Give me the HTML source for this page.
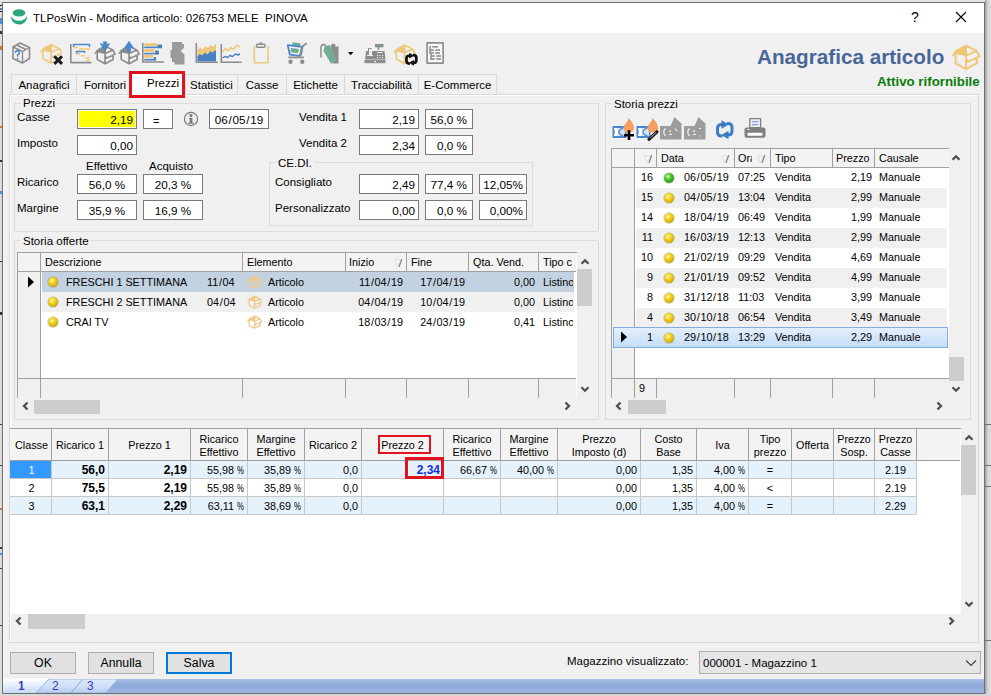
<!DOCTYPE html>
<html><head><meta charset="utf-8">
<style>
*{box-sizing:border-box}
html,body{margin:0;padding:0}
body{width:991px;height:696px;overflow:hidden;position:relative;background:#e6e6e6;font-family:"Liberation Sans",sans-serif;font-size:11.5px;color:#000}
.a{position:absolute}
.win{left:2px;top:2px;width:983px;height:692px;border:1px solid #6f6f6f;background:#f0f0f0}
.tb{position:absolute;background:#fff;border:1px solid #7a7a7a;text-align:right;padding-right:3px;padding-top:1px;line-height:18px;font-size:11.7px;white-space:nowrap;height:20px!important}
.lbl{position:absolute;white-space:nowrap;line-height:14px}
.grp{position:absolute;border:1px solid #dcdcdc}
.glbl{position:absolute;background:#f0f0f0;padding:0 2px;line-height:14px;white-space:nowrap}
.tab{position:absolute;top:74px;height:21px;border:1px solid #d9d9d9;border-right:none;background:#f0f0f0;text-align:center;line-height:20px;white-space:nowrap}
.g{font-size:10.8px;white-space:nowrap}
.gh{position:absolute;line-height:18px;white-space:nowrap}
.vl{position:absolute;width:1px;background:#a0a0a0}
.hl{position:absolute;height:1px;background:#a0a0a0}
.dot{position:absolute;width:10px;height:10px;border-radius:50%;box-shadow:0 0 0 0.5px rgba(90,80,20,.45);background:radial-gradient(circle at 40% 35%,#fff6a0 0,#f0d020 35%,#c8a000 80%,#8a6d00 100%)}
.gdot{background:radial-gradient(circle at 40% 35%,#c8ffb0 0,#40c020 40%,#1a8a10 85%,#0d5a08 100%)}
.btn{position:absolute;border:1px solid #adadad;background:#e1e1e1;text-align:center;line-height:20px;font-size:12.3px}
</style></head><body>
<!-- background left strip -->
<div class="a" style="left:0;top:0;width:2px;height:696px;background:#dcdcdc"></div><div class="a" style="left:0;top:0;width:991px;height:2px;background:#e4e4e4"></div>
<div class="a" style="left:985px;top:0;width:6px;height:696px;background:linear-gradient(90deg,#9a9a9a,#cfcfcf 40%,#e4e4e4)"></div><div class="a" style="left:0;top:694px;width:991px;height:2px;background:#d8d8d8"></div><div class="a" style="left:0;top:5px;width:2px;height:1px;background:#202020"></div><div class="a" style="left:0;top:8px;width:2px;height:2px;background:#5080c0"></div><div class="a" style="left:0;top:11px;width:2px;height:1px;background:#202020"></div><div class="a" style="left:0;top:18px;width:2px;height:6px;background:#4a90e0"></div><div class="a" style="left:0;top:31px;width:2px;height:3px;background:#403020"></div><div class="a" style="left:0;top:46px;width:2px;height:4px;background:#c08030"></div><div class="a" style="left:0;top:126px;width:2px;height:2px;background:#c08030"></div><div class="a" style="left:0;top:160px;width:2px;height:2px;background:#303030"></div><div class="a" style="left:0;top:191px;width:2px;height:3px;background:#4a90e0"></div><div class="a" style="left:0;top:261px;width:2px;height:1px;background:#303030"></div><div class="a" style="left:0;top:312px;width:2px;height:3px;background:#403020"></div><div class="a" style="left:0;top:424px;width:2px;height:1px;background:#404040"></div><div class="a" style="left:0;top:465px;width:2px;height:1px;background:#404040"></div><div class="a" style="left:0;top:508px;width:2px;height:2px;background:#c08030"></div><div class="a" style="left:0;top:547px;width:2px;height:2px;background:#404040"></div><div class="a" style="left:0;top:553px;width:2px;height:2px;background:#4a90e0"></div><div class="a" style="left:0;top:568px;width:2px;height:1px;background:#404040"></div><div class="a" style="left:0;top:625px;width:2px;height:1px;background:#404040"></div><div class="a" style="left:985px;top:424px;width:6px;height:1px;background:#707070"></div><div class="a" style="left:985px;top:465px;width:6px;height:1px;background:#707070"></div><div class="a" style="left:985px;top:486px;width:6px;height:1px;background:#707070"></div><div class="a" style="left:985px;top:640px;width:6px;height:1px;background:#707070"></div><div class="a win"></div>
<!-- title bar -->
<div class="a" style="left:3px;top:3px;width:981px;height:30px;background:#fff"></div>
<svg class="a" style="left:11px;top:8px" width="18" height="18" viewBox="0 0 18 18"><ellipse cx="8" cy="4.9" rx="6.3" ry="3.7" fill="#2aa879"/><path d="M0 7.5 C2 14.5 14 14.5 16 7.5 C16.5 13 12.5 16.5 8 16.5 C3.5 16.5 -0.5 13 0 7.5Z" fill="#2aa879"/></svg>
<div class="lbl" style="left:33px;top:11px;font-size:11.5px;color:#000">TLPosWin - Modifica articolo: 026753 MELE&nbsp; PINOVA</div>
<div class="lbl" style="left:911px;top:10px;font-size:14px">?</div>
<svg class="a" style="left:955px;top:11px" width="12" height="12" viewBox="0 0 12 12"><path d="M1 1L11 11M11 1L1 11" stroke="#000" stroke-width="1.1"/></svg>

<svg class="a" style="left:0;top:0" width="460" height="70" viewBox="0 0 460 70">
<g fill="none" stroke-linejoin="round">
<!-- 1 box ? -->
<path d="M13 47 L20 43 L29.5 47.5 V58.5 L22.5 63 L13 58.5 Z" stroke="#8c8c8c" stroke-width="1.6"/>
<path d="M13 47 L22.5 51.5 L29.5 47.5 M22.5 51.5 V63 M16.5 45 L26 49.5" stroke="#8c8c8c" stroke-width="1.4"/>
<path d="M15.3 52.8 Q15.6 50.6 17.6 50.7 Q19.6 50.9 19.3 52.9 Q19 54.4 17.6 55 V56.6" stroke="#3f80cc" stroke-width="1.5"/>
<circle cx="17.6" cy="58.6" r="0.9" fill="#3f80cc"/>
<!-- 2 open box x --><path d="M51.00 44.20 L42.80 48.50 L40.20 52.50 L42.80 50.50 L51.00 52.30 Z" fill="#eec77a" stroke="#eec77a" stroke-width="0.90" stroke-linejoin="round"/><path d="M42.80 50.00 V58.50 L51.00 63.00 L59.50 58.50 V54.00 M51.00 44.20 V63.00 M51.00 44.50 L59.30 48.60 L51.00 52.30 M59.30 48.60 L61.70 52.90 L52.50 57.30 L51.00 54.50" fill="none" stroke="#eec77a" stroke-width="1.5" stroke-linejoin="round"/><path d="M54.3 56.2 L62 63.9 M62 56.2 L54.3 63.9" stroke="#f0f0f0" stroke-width="5"/><path d="M54.3 56.2 L62 63.9 M62 56.2 L54.3 63.9" stroke="#1a1a1a" stroke-width="3"/>
<!-- 3 gantt -->
<path d="M70.8 44 V62.6 H91.5" stroke="#8c8c8c" stroke-width="1.6"/>
<path d="M73.5 47 V44.5 H89.5 V47" stroke="#4a86cc" stroke-width="1.5"/>
<path d="M73.5 47.5 H78 M79 49 H90 M76.5 54 H80 M81 55.8 H85 M85.5 58 H90 M86 60.5 H90" stroke="#eec77a" stroke-width="1.5"/>
<path d="M76.5 53.5 V51.5 H84.5 V53" stroke="#4a86cc" stroke-width="1.5"/>
<!-- 4 box down arrow --><path d="M105.00 45.84 L97.21 49.92 L94.74 53.72 L97.21 51.82 L105.00 53.53 Z" fill="#8a8a8a" stroke="#8a8a8a" stroke-width="0.96" stroke-linejoin="round"/><path d="M97.21 51.35 V59.42 L105.00 63.70 L113.07 59.42 V55.15 M105.00 45.84 V63.70 M105.00 46.12 L112.88 50.02 L105.00 53.53 M112.88 50.02 L115.16 54.10 L106.42 58.28 L105.00 55.62" fill="none" stroke="#8a8a8a" stroke-width="1.6" stroke-linejoin="round"/><path d="M103.3 41.8 H106.7 V44.5 L109.8 43.6 L105 51.2 L100.2 43.6 L103.3 44.5 Z" fill="#4a86cc" stroke="#4a86cc" stroke-width="0.6" stroke-linejoin="round"/>
<!-- 5 box up arrow --><path d="M129.00 45.84 L121.21 49.92 L118.74 53.72 L121.21 51.82 L129.00 53.53 Z" fill="#8a8a8a" stroke="#8a8a8a" stroke-width="0.96" stroke-linejoin="round"/><path d="M121.21 51.35 V59.42 L129.00 63.70 L137.07 59.42 V55.15 M129.00 45.84 V63.70 M129.00 46.12 L136.88 50.02 L129.00 53.53 M136.88 50.02 L139.16 54.10 L130.43 58.28 L129.00 55.62" fill="none" stroke="#8a8a8a" stroke-width="1.6" stroke-linejoin="round"/><path d="M127.3 51.5 H130.7 V47.5 L133.8 48.3 L129 41.2 L124.2 48.3 L127.3 47.5 Z" fill="#4a86cc" stroke="#4a86cc" stroke-width="0.6" stroke-linejoin="round"/>
<!-- 6 bar chart -->
<path d="M142.8 43 V62 H164" stroke="#8c8c8c" stroke-width="1.6"/>
<g stroke="none"><rect x="144.2" y="43.2" width="12.8" height="2.8" fill="#eec77a"/><rect x="157.5" y="44.5" width="4.5" height="3.6" fill="#4a80c4"/><rect x="144.2" y="46.6" width="17.8" height="1.6" fill="#4a80c4"/>
<rect x="144.2" y="49.1" width="10.3" height="2.9" fill="#eec77a"/><rect x="155.2" y="50.5" width="3.6" height="3.9" fill="#4a80c4"/><rect x="144.2" y="52.8" width="14.6" height="1.6" fill="#4a80c4"/>
<rect x="144.2" y="55" width="8.8" height="3" fill="#eec77a"/><rect x="153.8" y="57" width="2.2" height="3.5" fill="#4a80c4"/><rect x="144.2" y="58.9" width="11.8" height="1.6" fill="#4a80c4"/></g>
<!-- 7 gray blob -->
<path d="M172 42 H182 V44 H184 V48 L180.5 51 L184.5 54.5 V64.5 H174.5 V62 H172 V58 H170.5 V50 H172 Z" fill="#9a9a9a"/>
<!-- 8 area chart -->
<path d="M196.3 43 V62.3 H217.8" stroke="#8c8c8c" stroke-width="1.6"/>
<path d="M197.5 50 L200 47.5 L202.5 49.5 L205.5 46 L208 48 L211 45 L213 47 L216 43.5 V61.5 H197.5 Z" fill="#eec77a"/>
<path d="M197.5 56 L200 54 L202 55.5 L205 52.5 L207.5 54.5 L210.5 51 L212.5 52.5 L216 50 V61.5 H197.5 Z" fill="#4a80c4"/>
<!-- 9 line chart -->
<path d="M221.3 44 V62.3 H241.7" stroke="#8c8c8c" stroke-width="1.6"/>
<path d="M222.5 52 L225.5 48.5 L228 51 L231 47.5 L233.5 49.5 L237 45 L240 47" stroke="#eec77a" stroke-width="1.5"/>
<path d="M222.5 58 L225 56.5 L227.5 57.5 L230 55.5 L232.5 56.5 L235.5 54 L238 55 L240 54" stroke="#4a80c4" stroke-width="1.4"/>
<!-- 10 clipboard -->
<path d="M254.3 46 V62.8 H268 V46" stroke="#eec77a" stroke-width="1.6"/>
<rect x="256.5" y="44.3" width="8.5" height="3" rx="1" stroke="#8c8c8c" stroke-width="1.5"/>
<path d="M259.5 43.5 Q260.8 41.5 262 43.5" stroke="#8c8c8c" stroke-width="1.2"/>
<!-- 11 cart -->
<path d="M292.5 42.3 L300.5 43.3 L300 46.8 L292 45.8 Z" fill="#6fae92"/>
<path d="M287.8 45.2 L302 46.8 L300 55.8 L289.8 54.6 Z" stroke="#4a86cc" stroke-width="1.8"/>
<path d="M291 48 L298.8 49 L298 53.3 L290.5 52.3 Z" fill="#6fae92"/>
<path d="M300.8 55.5 L302.8 46 L306.8 43.3" stroke="#8c8c8c" stroke-width="1.8"/>
<path d="M288.3 57.4 H303.8" stroke="#8c8c8c" stroke-width="1.8"/>
<circle cx="290.5" cy="61.7" r="2.2" fill="#8c8c8c"/><circle cx="302.2" cy="61.7" r="2.2" fill="#8c8c8c"/>
<!-- 12 bag -->
<path d="M321 57.5 V48 Q321 44.5 323.5 44.5 Q326 44.5 326 47.5 V50" stroke="#8c8c8c" stroke-width="1.5"/>
<path d="M331 46 Q331 43 333.5 43.5 Q336 44 335.5 47 L338.5 46 V63.5 H333 Z" fill="#8c8c8c"/>
<path d="M324.5 46.5 L330 45 L336.5 61 L331 63.8 L323.5 51 Z" fill="#6fae92"/>
<path d="M348 52 H353.5 L350.7 55.2 Z" fill="#000"/>
<!-- 13 cash register -->
<rect x="375" y="44" width="8.5" height="3.3" fill="#8c8c8c"/><path d="M376.5 45.6 H382" stroke="#6fae92" stroke-width="1.2"/>
<path d="M378.5 47 V50" stroke="#8c8c8c" stroke-width="1.5"/>
<path d="M366 51 H368 V48 H372 V51 H384.5 L385.5 59.5 H365 Z" fill="#8c8c8c"/>
<rect x="369" y="48.8" width="3" height="7" fill="#f0f0f0"/>
<path d="M367 55.5 H373 M377 52.5 H382.5" stroke="#f0f0f0" stroke-width="1"/>
<path d="M377 55.5 H378 M379.5 55.5 H380.5 M382 55.5 H383 M377 57.5 H378 M379.5 57.5 H380.5 M382 57.5 H383" stroke="#f0f0f0" stroke-width="1"/>
<rect x="364.5" y="60" width="21" height="3.2" fill="#8c8c8c"/><rect x="374" y="61" width="2" height="1.2" fill="#f0f0f0"/>
<!-- 14 box refresh --><path d="M404.50 44.70 L396.30 49.00 L393.70 53.00 L396.30 51.00 L404.50 52.80 Z" fill="#eec77a" stroke="#eec77a" stroke-width="0.90" stroke-linejoin="round"/><path d="M396.30 50.50 V59.00 L404.50 63.50 L413.00 59.00 V54.50 M404.50 44.70 V63.50 M404.50 45.00 L412.80 49.10 L404.50 52.80 M412.80 49.10 L415.20 53.40 L406.00 57.80 L404.50 55.00" fill="none" stroke="#eec77a" stroke-width="1.5" stroke-linejoin="round"/><circle cx="411.3" cy="59.3" r="6.6" fill="#f0f0f0"/><path d="M411.22 55.73 L409.18 55.73 Q406.46 55.73 406.46 58.45 L406.46 60.83 Q406.46 63.55 409.18 63.55 L409.86 63.55" fill="none" stroke="#101010" stroke-width="2.7"/><path d="M409.18 52.87 L414.14 55.73 L409.18 58.58 Z" fill="#101010"/><path d="M411.56 62.87 L413.60 62.87 Q416.32 62.87 416.32 60.15 L416.32 57.77 Q416.32 55.05 413.60 55.05 L412.92 55.05" fill="none" stroke="#101010" stroke-width="2.7"/><path d="M413.94 60.01 L408.97 62.87 L413.94 65.72 Z" fill="#101010"/>
<!-- 15 document -->
<rect x="427.1" y="42.9" width="16" height="20.2" fill="#fafafa" stroke="#8c8c8c" stroke-width="1.7"/>
<g fill="#8c8c8c" stroke="none">
<rect x="429.3" y="46" width="1.6" height="8"/><rect x="430.3" y="53.5" width="1.6" height="6.3"/>
<rect x="432.3" y="46" width="5.6" height="1.6"/>
<rect x="430.8" y="49.3" width="3" height="1.6"/><rect x="435.2" y="49.3" width="4.8" height="1.6"/>
<rect x="430.8" y="52.2" width="3" height="1.6"/><rect x="435.2" y="52.2" width="4.8" height="1.6"/>
<rect x="431.8" y="55.2" width="3" height="1.6"/><rect x="436.2" y="55.2" width="4.8" height="1.6"/>
<rect x="430.3" y="58.2" width="4.5" height="1.6"/><rect x="436.2" y="58.2" width="4.8" height="1.6"/>
</g>
</g>
</svg>
<svg class="a" style="left:940px;top:36px" width="44" height="36" viewBox="940 36 44 36"><path d="M965.97 45.25 L955.56 50.72 L952.25 55.80 L955.56 53.26 L965.97 55.54 Z" fill="#eec877" stroke="#eec877" stroke-width="1.20" stroke-linejoin="round"/><path d="M955.56 52.62 V63.41 L965.97 69.13 L976.76 63.41 V57.70 M965.97 45.25 V69.13 M965.97 45.63 L976.51 50.84 L965.97 55.54 M976.51 50.84 L979.56 56.30 L967.88 61.89 L965.97 58.34" fill="none" stroke="#eec877" stroke-width="2.0" stroke-linejoin="round"/></svg>

<!-- header -->
<div class="lbl" style="left:757px;top:44px;font-size:20.7px;font-weight:bold;color:#4a6699;line-height:26px">Anagrafica articolo</div>
<div class="lbl" style="left:877px;top:74px;font-size:13.3px;font-weight:bold;color:#0c7c0c;line-height:16px">Attivo rifornibile</div>

<!-- tabs -->
<div class="a" style="left:9px;top:94px;width:970px;height:1px;background:#d9d9d9"></div>
<div class="tab" style="left:11px;width:65px">Anagrafici</div>
<div class="tab" style="left:76px;width:57px">Fornitori</div>
<div class="tab" style="left:185px;width:52px">Statistici</div>
<div class="tab" style="left:237px;width:49px">Casse</div>
<div class="tab" style="left:286px;width:58px">Etichette</div>
<div class="tab" style="left:344px;width:74px">Tracciabilità</div>
<div class="tab" style="left:418px;width:79px;border-right:1px solid #d9d9d9">E-Commerce</div>


<!-- page panel border -->
<div class="a" style="left:9px;top:94px;width:970px;height:549px;border:1px solid #d9d9d9;border-top:none"></div><div class="a" style="left:10px;top:95px;width:968px;height:1px;background:#fff"></div><div class="a" style="left:10px;top:95px;width:1px;height:547px;background:#fff"></div><div class="a" style="left:3px;top:33px;width:1px;height:646px;background:#f8f8f8"></div>

<div class="a" style="left:129px;top:71px;width:56px;height:27px;border:3px solid #e0141e;background:#fff"></div>
<div class="lbl" style="left:147px;top:76px">Prezzi</div>
<!-- Prezzi group -->
<div class="grp" style="left:14px;top:103px;width:585px;height:129px"></div>
<div class="glbl" style="left:21px;top:96px">Prezzi</div>
<div class="lbl" style="left:17px;top:110px">Casse</div>
<div class="tb" style="left:77px;top:109px;width:60px;height:21px;background:#ffff00;box-shadow:inset 0 0 0 1px #fff">2,19</div>
<div class="tb" style="left:143px;top:109px;width:30px;height:21px;text-align:left;padding:2px 0 0 9px;font-size:11px">=</div>
<svg class="a" style="left:183px;top:111px" width="16" height="16" viewBox="0 0 16 16"><circle cx="8" cy="8" r="6.6" fill="none" stroke="#7a7a7a" stroke-width="1.2"/><circle cx="8" cy="4.5" r="1.5" fill="#7a7a7a"/><rect x="6.7" y="6.9" width="2.7" height="5" fill="#7a7a7a"/><rect x="5.8" y="6.9" width="1.5" height="1" fill="#7a7a7a"/><rect x="5.3" y="11.4" width="5.4" height="1.4" fill="#7a7a7a"/></svg>
<div class="tb" style="left:209px;top:109px;width:60px;height:21px;text-align:center;padding:1px 0 0 0">06<span style="margin:0 0.7px">/</span>05<span style="margin:0 0.7px">/</span>19</div>
<div class="lbl" style="left:17px;top:136px">Imposto</div>
<div class="tb" style="left:77px;top:135px;width:60px;height:21px">0,00</div>
<div class="lbl" style="left:86px;top:159px">Effettivo</div>
<div class="lbl" style="left:149px;top:159px">Acquisto</div>
<div class="lbl" style="left:17px;top:175px">Ricarico</div>
<div class="tb" style="left:77px;top:174px;width:60px;height:20px;text-align:center;padding:1px 0 0 0;line-height:18px">56,0 %</div>
<div class="tb" style="left:143px;top:174px;width:60px;height:20px;text-align:center;padding:1px 0 0 0;line-height:18px">20,3 %</div>
<div class="lbl" style="left:17px;top:201px">Margine</div>
<div class="tb" style="left:77px;top:200px;width:60px;height:20px;text-align:center;padding:1px 0 0 0;line-height:18px">35,9 %</div>
<div class="tb" style="left:143px;top:200px;width:60px;height:20px;text-align:center;padding:1px 0 0 0;line-height:18px">16,9 %</div>

<div class="lbl" style="left:299px;top:110px">Vendita 1</div>
<div class="tb" style="left:359px;top:109px;width:60px;height:21px">2,19</div>
<div class="tb" style="left:425px;top:109px;width:48px;height:21px;text-align:right;padding:1px 5px 0 0">56,0 %</div>
<div class="lbl" style="left:299px;top:136px">Vendita 2</div>
<div class="tb" style="left:359px;top:135px;width:60px;height:20px">2,34</div>
<div class="tb" style="left:425px;top:135px;width:48px;height:20px;text-align:right;padding:1px 5px 0 0">0,0 %</div>

<div class="grp" style="left:269px;top:162px;width:264px;height:64px"></div>
<div class="glbl" style="left:276px;top:156px">CE.DI.</div>
<div class="lbl" style="left:275px;top:175px">Consigliato</div>
<div class="tb" style="left:359px;top:174px;width:60px;height:20px">2,49</div>
<div class="tb" style="left:425px;top:174px;width:48px;height:20px;text-align:right;padding:1px 5px 0 0">77,4 %</div>
<div class="tb" style="left:479px;top:174px;width:48px;height:20px;text-align:right;padding:1px 3px 0 0">12,05%</div>
<div class="lbl" style="left:275px;top:201px">Personalizzato</div>
<div class="tb" style="left:359px;top:200px;width:60px;height:20px">0,00</div>
<div class="tb" style="left:425px;top:200px;width:48px;height:20px;text-align:right;padding:1px 5px 0 0">0,0 %</div>
<div class="tb" style="left:479px;top:200px;width:48px;height:20px;text-align:right;padding:1px 3px 0 0">0,00%</div>

<!-- Storia offerte group -->
<div class="grp" style="left:14px;top:240px;width:585px;height:180px"></div>
<div class="glbl" style="left:21px;top:234px">Storia offerte</div>
<!-- grid -->
<div class="a" style="left:17px;top:252px;width:560px;height:146px;background:#fff;border-left:1px solid #a0a0a0;border-top:1px solid #a0a0a0"></div>
<div class="a" style="left:18px;top:253px;width:558px;height:19px;background:#f3f3f3;border-bottom:1px solid #a0a0a0"></div>
<div class="a" style="left:18px;top:272px;width:23px;height:126px;background:#f0f0f0"></div>
<div class="a" style="left:42px;top:272px;width:532px;height:20px;background:#c3d2e1"></div>
<div class="a" style="left:42px;top:292px;width:532px;height:20px;background:#f0f0f0"></div>
<div class="a" style="left:18px;top:378px;width:558px;height:20px;background:#f0f0f0;border-top:1px solid #a0a0a0"></div>
<div class="vl" style="left:40px;top:253px;height:145px"></div>
<div class="vl" style="left:242px;top:253px;height:19px"></div>
<div class="vl" style="left:345px;top:253px;height:19px"></div>
<div class="vl" style="left:406px;top:253px;height:19px"></div>
<div class="vl" style="left:468px;top:253px;height:19px"></div>
<div class="vl" style="left:538px;top:253px;height:19px"></div>
<div class="vl" style="left:242px;top:379px;height:19px"></div>
<div class="vl" style="left:345px;top:379px;height:19px"></div>
<div class="vl" style="left:406px;top:379px;height:19px"></div>
<div class="vl" style="left:468px;top:379px;height:19px"></div>
<div class="vl" style="left:538px;top:379px;height:19px"></div>
<div class="a g" style="left:45px;top:256px;line-height:13px">Descrizione</div>
<div class="a g" style="left:247px;top:256px;line-height:13px">Elemento</div>
<div class="a g" style="left:349px;top:256px;line-height:13px">Inizio</div>
<svg class="a" style="left:394px;top:258px" width="9" height="10" viewBox="0 0 9 10"><path d="M0.5 2H6.5L3.5 8.5Z" fill="#fafafa" stroke="#dadada" stroke-width="1"/><path d="M7.8 1L5 9" stroke="#808080" stroke-width="1.1"/></svg>
<div class="a g" style="left:411px;top:256px;line-height:13px">Fine</div>
<div class="a g" style="left:473px;top:256px;line-height:13px">Qta. Vend.</div>
<div class="a g" style="left:543px;top:256px;line-height:13px;width:31px;overflow:hidden">Tipo c</div>
<svg class="a" style="left:27px;top:276px" width="8" height="12" viewBox="0 0 8 12"><path d="M1 0.5L7 6L1 11.5Z" fill="#000"/></svg>
<!-- rows -->
<div class="dot" style="left:48px;top:277px"></div>
<div class="dot" style="left:48px;top:297px"></div>
<div class="dot" style="left:48px;top:317px"></div>
<div class="a g" style="left:66px;top:276px;line-height:13px">FRESCHI 1 SETTIMANA</div>
<div class="a g" style="left:207px;top:276px;line-height:13px">11<span style="margin:0 0.7px">/</span>04</div>
<div class="a g" style="left:66px;top:296px;line-height:13px">FRESCHI 2 SETTIMANA</div>
<div class="a g" style="left:207px;top:296px;line-height:13px">04<span style="margin:0 0.7px">/</span>04</div>
<div class="a g" style="left:66px;top:316px;line-height:13px">CRAI TV</div>
<div class="a g" style="left:268px;top:276px;line-height:13px">Articolo</div>
<div class="a g" style="left:268px;top:296px;line-height:13px">Articolo</div>
<div class="a g" style="left:268px;top:316px;line-height:13px">Articolo</div>
<div class="a g" style="left:346px;top:276px;width:57px;text-align:right;line-height:13px">11<span style="margin:0 0.7px">/</span>04<span style="margin:0 0.7px">/</span>19</div>
<div class="a g" style="left:346px;top:296px;width:57px;text-align:right;line-height:13px">04<span style="margin:0 0.7px">/</span>04<span style="margin:0 0.7px">/</span>19</div>
<div class="a g" style="left:346px;top:316px;width:57px;text-align:right;line-height:13px">18<span style="margin:0 0.7px">/</span>03<span style="margin:0 0.7px">/</span>19</div>
<div class="a g" style="left:407px;top:276px;width:58px;text-align:right;line-height:13px">17<span style="margin:0 0.7px">/</span>04<span style="margin:0 0.7px">/</span>19</div>
<div class="a g" style="left:407px;top:296px;width:58px;text-align:right;line-height:13px">10<span style="margin:0 0.7px">/</span>04<span style="margin:0 0.7px">/</span>19</div>
<div class="a g" style="left:407px;top:316px;width:58px;text-align:right;line-height:13px">24<span style="margin:0 0.7px">/</span>03<span style="margin:0 0.7px">/</span>19</div>
<div class="a g" style="left:470px;top:276px;width:65px;text-align:right;line-height:13px">0,00</div>
<div class="a g" style="left:470px;top:296px;width:65px;text-align:right;line-height:13px">0,00</div>
<div class="a g" style="left:470px;top:316px;width:65px;text-align:right;line-height:13px">0,41</div>
<div class="a g" style="left:543px;top:276px;line-height:13px;width:30px;overflow:hidden">Listino</div>
<div class="a g" style="left:543px;top:296px;line-height:13px;width:30px;overflow:hidden">Listino</div>
<div class="a g" style="left:543px;top:316px;line-height:13px;width:30px;overflow:hidden">Listino</div>
<svg class="a" style="left:247px;top:275px" width="16" height="15" viewBox="247 275 16 15"><path d="M254.56 275.93 L249.15 278.77 L247.43 281.41 L249.15 280.09 L254.56 281.28 Z" fill="#f0c888" stroke="#f0c888" stroke-width="0.72" stroke-linejoin="round"/><path d="M249.15 279.76 V285.37 L254.56 288.34 L260.17 285.37 V282.40 M254.56 275.93 V288.34 M254.56 276.13 L260.04 278.84 L254.56 281.28 M260.04 278.84 L261.62 281.67 L255.55 284.58 L254.56 282.73" fill="none" stroke="#f0c888" stroke-width="1.2" stroke-linejoin="round"/></svg><svg class="a" style="left:247px;top:295px" width="16" height="15" viewBox="247 295 16 15"><path d="M254.56 295.93 L249.15 298.77 L247.43 301.41 L249.15 300.09 L254.56 301.28 Z" fill="#f0c888" stroke="#f0c888" stroke-width="0.72" stroke-linejoin="round"/><path d="M249.15 299.76 V305.37 L254.56 308.34 L260.17 305.37 V302.40 M254.56 295.93 V308.34 M254.56 296.13 L260.04 298.84 L254.56 301.28 M260.04 298.84 L261.62 301.67 L255.55 304.58 L254.56 302.73" fill="none" stroke="#f0c888" stroke-width="1.2" stroke-linejoin="round"/></svg><svg class="a" style="left:247px;top:315px" width="16" height="15" viewBox="247 315 16 15"><path d="M254.56 315.93 L249.15 318.77 L247.43 321.41 L249.15 320.09 L254.56 321.28 Z" fill="#f0c888" stroke="#f0c888" stroke-width="0.72" stroke-linejoin="round"/><path d="M249.15 319.76 V325.37 L254.56 328.34 L260.17 325.37 V322.40 M254.56 315.93 V328.34 M254.56 316.13 L260.04 318.84 L254.56 321.28 M260.04 318.84 L261.62 321.67 L255.55 324.58 L254.56 322.73" fill="none" stroke="#f0c888" stroke-width="1.2" stroke-linejoin="round"/></svg>
<!-- vscroll -->
<svg class="a" style="left:580px;top:258px" width="10" height="7" viewBox="0 0 10 7"><path d="M1.5 5.8L5 2.3L8.5 5.8" fill="none" stroke="#505050" stroke-width="2.3"/></svg>
<div class="a" style="left:577px;top:269px;width:15px;height:37px;background:#cdcdcd"></div>
<svg class="a" style="left:580px;top:386px" width="10" height="7" viewBox="0 0 10 7"><path d="M1.5 1.2L5 4.7L8.5 1.2" fill="none" stroke="#505050" stroke-width="2.3"/></svg>
<!-- hscroll -->
<svg class="a" style="left:22px;top:401px" width="7" height="10" viewBox="0 0 7 10"><path d="M5.5 1.5L2 5L5.5 8.5" fill="none" stroke="#505050" stroke-width="2.3"/></svg>
<div class="a" style="left:34px;top:400px;width:66px;height:14px;background:#cdcdcd"></div>
<svg class="a" style="left:564px;top:401px" width="7" height="10" viewBox="0 0 7 10"><path d="M1.5 1.5L5 5L1.5 8.5" fill="none" stroke="#505050" stroke-width="2.3"/></svg>

<div class="grp" style="left:605px;top:103px;width:366px;height:317px"></div>
<div class="glbl" style="left:612px;top:97px">Storia prezzi</div>
<svg class="a" style="left:605px;top:112px" width="170" height="32" viewBox="605 112 170 32">
<g stroke-linejoin="round">
<!-- 1 -->
<rect x="612.5" y="126" width="14" height="12" fill="#4a86cc"/>
<path d="M614 128 H617.5 Q619.5 132 617.5 136 H614 Q615.5 132 614 128Z" fill="#fff"/>
<path d="M622.5 128.3 A3.6 3.6 0 1 0 622.5 135.7" fill="none" stroke="#4a86cc" stroke-width="1.3"/>
<path d="M617.5 128 H625 V136 H617.5 Q619.5 132 617.5 128Z" fill="#e8f0fa" opacity="0.9"/>
<path d="M623.2 128.8 A3.3 3.3 0 1 0 623.2 135.2" fill="none" stroke="#4a86cc" stroke-width="1.3"/>
<path d="M628.5 118 C632 121.5 634.5 125 634 128.5 C633.5 131 631.5 132.5 628.5 132.5 C625.5 132.5 623.3 130.5 623.5 127.5 C623.8 124.5 626.5 123 627.5 121 C628 120 628.5 119 628.5 118 Z" fill="#f4a060"/>
<path d="M624 135.2 H634 M629 130.3 V140" stroke="#000" stroke-width="2.6"/>
<!-- 2 -->
<rect x="636.5" y="126" width="14" height="12" fill="#4a86cc"/>
<path d="M638 128 H641.5 Q643.5 132 641.5 136 H638 Q639.5 132 638 128Z" fill="#fff"/>
<path d="M641.5 128 H649 V136 H641.5 Q643.5 132 641.5 128Z" fill="#e8f0fa" opacity="0.9"/>
<path d="M647.2 128.8 A3.3 3.3 0 1 0 647.2 135.2" fill="none" stroke="#4a86cc" stroke-width="1.3"/>
<path d="M652.5 118 C656 121.5 658.5 125 658 128.5 C657.5 131 655.5 132.5 652.5 132.5 C649.5 132.5 647.3 130.5 647.5 127.5 C647.8 124.5 650.5 123 651.5 121 C652 120 652.5 119 652.5 118 Z" fill="#f4a060"/>
<path d="M649 139.3 L657 131.8" stroke="#222" stroke-width="3.2" stroke-linecap="round"/>
<path d="M650.3 137.8 L656 132.5" stroke="#bbb" stroke-width="0.8"/>
<!-- 3,4 gray -->
<path d="M660 126 H670.5 L674.5 117 L681.5 123.5 V139.5 H660 Z" fill="#9c9c9c"/>
<path d="M665.5 128.5 Q662 132 665.5 136 M670 130 V132.5 M669 134.5 H672 M675 128.5 L677 131" fill="none" stroke="#f4f4f4" stroke-width="1.2"/>
<path d="M684 126 H694.5 L698.5 117 L705.5 123.5 V139.5 H684 Z" fill="#9c9c9c"/>
<path d="M689.5 128.5 Q686 132 689.5 136 M694 130 V132.5 M693 134.5 H696 M699 128.5 H701 M700 135.5 V136.5" fill="none" stroke="#f4f4f4" stroke-width="1.2"/>
<!-- refresh -->
<path d="M724.5 124.5 H721.5 Q717.5 124.5 717.5 128.5 V132 Q717.5 136 721.5 136 H722.5" fill="none" stroke="#3c7cc4" stroke-width="3"/>
<path d="M721.5 120.3 L728.8 124.5 L721.5 128.7 Z" fill="#3c7cc4"/>
<path d="M725 135 H728 Q732 135 732 131 V127.5 Q732 123.5 728 123.5 H727" fill="none" stroke="#3c7cc4" stroke-width="3"/>
<path d="M728.5 130.8 L721.2 135 L728.5 139.2 Z" fill="#3c7cc4"/>
<!-- printer -->
<rect x="749.8" y="118.7" width="10.8" height="9" fill="#f0f0f0" stroke="#808080" stroke-width="1.3"/>
<path d="M752 121.8 H758.3 M752 124.8 H758.3" stroke="#5b8fd0" stroke-width="1.1"/>
<rect x="744.5" y="127.5" width="21" height="10.2" rx="2.2" fill="#808080"/>
<rect x="747.5" y="132.8" width="15" height="3" rx="1" fill="#fff"/>
<rect x="747.5" y="129" width="2" height="1" fill="#fff"/>
</g>
</svg>


<div class="a" style="left:611px;top:148px;width:338px;height:250px;background:#fff;border-left:1px solid #a0a0a0;border-top:1px solid #a0a0a0"></div>
<div class="a" style="left:612px;top:149px;width:337px;height:19px;background:#f3f3f3;border-bottom:1px solid #a0a0a0"></div>
<div class="a" style="left:612px;top:168px;width:23px;height:230px;background:#f0f0f0"></div>
<div class="a" style="left:636px;top:188px;width:311px;height:20px;background:#f0f0f0"></div>
<div class="a" style="left:636px;top:228px;width:311px;height:20px;background:#f0f0f0"></div>
<div class="a" style="left:636px;top:268px;width:311px;height:20px;background:#f0f0f0"></div>
<div class="a" style="left:636px;top:308px;width:311px;height:20px;background:#f0f0f0"></div>
<div class="a" style="left:613px;top:327px;width:335px;height:21px;border:1px solid #84acdd;background:linear-gradient(#e4effc,#c4ddfa)"></div>
<div class="a" style="left:612px;top:378px;width:337px;height:20px;background:#f0f0f0;border-top:1px solid #a0a0a0"></div>
<div class="vl" style="left:634px;top:149px;height:19px"></div>
<div class="vl" style="left:634px;top:379px;height:19px"></div>
<div class="vl" style="left:656px;top:149px;height:19px"></div>
<div class="vl" style="left:656px;top:379px;height:19px"></div>
<div class="vl" style="left:734px;top:149px;height:19px"></div>
<div class="vl" style="left:734px;top:379px;height:19px"></div>
<div class="vl" style="left:770px;top:149px;height:19px"></div>
<div class="vl" style="left:770px;top:379px;height:19px"></div>
<div class="vl" style="left:832px;top:149px;height:19px"></div>
<div class="vl" style="left:832px;top:379px;height:19px"></div>
<div class="vl" style="left:874px;top:149px;height:19px"></div>
<div class="vl" style="left:874px;top:379px;height:19px"></div>
<div class="vl" style="left:634px;top:168px;height:159px"></div>
<div class="vl" style="left:634px;top:348px;height:30px"></div>
<div class="a g" style="left:661px;top:152px;line-height:13px">Data</div>
<div class="a g" style="left:738px;top:152px;line-height:13px;width:14px;overflow:hidden">Ora</div>
<div class="a g" style="left:775px;top:152px;line-height:13px">Tipo</div>
<div class="a g" style="left:836px;top:152px;line-height:13px">Prezzo</div>
<div class="a g" style="left:879px;top:152px;line-height:13px">Causale</div>
<svg class="a" style="left:644px;top:154px" width="9" height="10" viewBox="0 0 9 10"><path d="M0.5 2H6.5L3.5 8.5Z" fill="#fafafa" stroke="#dadada" stroke-width="1"/><path d="M7.8 1L5 9" stroke="#808080" stroke-width="1.1"/></svg>
<svg class="a" style="left:721px;top:154px" width="9" height="10" viewBox="0 0 9 10"><path d="M0.5 2H6.5L3.5 8.5Z" fill="#fafafa" stroke="#dadada" stroke-width="1"/><path d="M7.8 1L5 9" stroke="#808080" stroke-width="1.1"/></svg>
<svg class="a" style="left:757px;top:154px" width="9" height="10" viewBox="0 0 9 10"><path d="M0.5 2H6.5L3.5 8.5Z" fill="#fafafa" stroke="#dadada" stroke-width="1"/><path d="M7.8 1L5 9" stroke="#808080" stroke-width="1.1"/></svg>
<div class="a g" style="left:636px;top:171px;width:17px;text-align:right;line-height:13px">16</div>
<div class="dot gdot" style="left:664px;top:173px"></div>
<div class="a g" style="left:684px;top:171px;line-height:13px">06<span style="margin:0 0.7px">/</span>05<span style="margin:0 0.7px">/</span>19</div>
<div class="a g" style="left:738px;top:171px;line-height:13px">07:25</div>
<div class="a g" style="left:775px;top:171px;line-height:13px">Vendita</div>
<div class="a g" style="left:832px;top:171px;width:40px;text-align:right;line-height:13px">2,19</div>
<div class="a g" style="left:879px;top:171px;line-height:13px">Manuale</div>
<div class="a g" style="left:636px;top:191px;width:17px;text-align:right;line-height:13px">15</div>
<div class="dot" style="left:664px;top:193px"></div>
<div class="a g" style="left:684px;top:191px;line-height:13px">04<span style="margin:0 0.7px">/</span>05<span style="margin:0 0.7px">/</span>19</div>
<div class="a g" style="left:738px;top:191px;line-height:13px">13:04</div>
<div class="a g" style="left:775px;top:191px;line-height:13px">Vendita</div>
<div class="a g" style="left:832px;top:191px;width:40px;text-align:right;line-height:13px">2,99</div>
<div class="a g" style="left:879px;top:191px;line-height:13px">Manuale</div>
<div class="a g" style="left:636px;top:211px;width:17px;text-align:right;line-height:13px">14</div>
<div class="dot" style="left:664px;top:213px"></div>
<div class="a g" style="left:684px;top:211px;line-height:13px">18<span style="margin:0 0.7px">/</span>04<span style="margin:0 0.7px">/</span>19</div>
<div class="a g" style="left:738px;top:211px;line-height:13px">06:49</div>
<div class="a g" style="left:775px;top:211px;line-height:13px">Vendita</div>
<div class="a g" style="left:832px;top:211px;width:40px;text-align:right;line-height:13px">1,99</div>
<div class="a g" style="left:879px;top:211px;line-height:13px">Manuale</div>
<div class="a g" style="left:636px;top:231px;width:17px;text-align:right;line-height:13px">11</div>
<div class="dot" style="left:664px;top:233px"></div>
<div class="a g" style="left:684px;top:231px;line-height:13px">16<span style="margin:0 0.7px">/</span>03<span style="margin:0 0.7px">/</span>19</div>
<div class="a g" style="left:738px;top:231px;line-height:13px">12:13</div>
<div class="a g" style="left:775px;top:231px;line-height:13px">Vendita</div>
<div class="a g" style="left:832px;top:231px;width:40px;text-align:right;line-height:13px">2,99</div>
<div class="a g" style="left:879px;top:231px;line-height:13px">Manuale</div>
<div class="a g" style="left:636px;top:251px;width:17px;text-align:right;line-height:13px">10</div>
<div class="dot" style="left:664px;top:253px"></div>
<div class="a g" style="left:684px;top:251px;line-height:13px">21<span style="margin:0 0.7px">/</span>02<span style="margin:0 0.7px">/</span>19</div>
<div class="a g" style="left:738px;top:251px;line-height:13px">09:29</div>
<div class="a g" style="left:775px;top:251px;line-height:13px">Vendita</div>
<div class="a g" style="left:832px;top:251px;width:40px;text-align:right;line-height:13px">4,69</div>
<div class="a g" style="left:879px;top:251px;line-height:13px">Manuale</div>
<div class="a g" style="left:636px;top:271px;width:17px;text-align:right;line-height:13px">9</div>
<div class="dot" style="left:664px;top:273px"></div>
<div class="a g" style="left:684px;top:271px;line-height:13px">21<span style="margin:0 0.7px">/</span>01<span style="margin:0 0.7px">/</span>19</div>
<div class="a g" style="left:738px;top:271px;line-height:13px">09:52</div>
<div class="a g" style="left:775px;top:271px;line-height:13px">Vendita</div>
<div class="a g" style="left:832px;top:271px;width:40px;text-align:right;line-height:13px">4,99</div>
<div class="a g" style="left:879px;top:271px;line-height:13px">Manuale</div>
<div class="a g" style="left:636px;top:291px;width:17px;text-align:right;line-height:13px">8</div>
<div class="dot" style="left:664px;top:293px"></div>
<div class="a g" style="left:684px;top:291px;line-height:13px">31<span style="margin:0 0.7px">/</span>12<span style="margin:0 0.7px">/</span>18</div>
<div class="a g" style="left:738px;top:291px;line-height:13px">11:03</div>
<div class="a g" style="left:775px;top:291px;line-height:13px">Vendita</div>
<div class="a g" style="left:832px;top:291px;width:40px;text-align:right;line-height:13px">3,99</div>
<div class="a g" style="left:879px;top:291px;line-height:13px">Manuale</div>
<div class="a g" style="left:636px;top:311px;width:17px;text-align:right;line-height:13px">4</div>
<div class="dot" style="left:664px;top:313px"></div>
<div class="a g" style="left:684px;top:311px;line-height:13px">30<span style="margin:0 0.7px">/</span>10<span style="margin:0 0.7px">/</span>18</div>
<div class="a g" style="left:738px;top:311px;line-height:13px">06:54</div>
<div class="a g" style="left:775px;top:311px;line-height:13px">Vendita</div>
<div class="a g" style="left:832px;top:311px;width:40px;text-align:right;line-height:13px">3,49</div>
<div class="a g" style="left:879px;top:311px;line-height:13px">Manuale</div>
<div class="a g" style="left:636px;top:331px;width:17px;text-align:right;line-height:13px">1</div>
<div class="dot" style="left:664px;top:333px"></div>
<div class="a g" style="left:684px;top:331px;line-height:13px">29<span style="margin:0 0.7px">/</span>10<span style="margin:0 0.7px">/</span>18</div>
<div class="a g" style="left:738px;top:331px;line-height:13px">13:29</div>
<div class="a g" style="left:775px;top:331px;line-height:13px">Vendita</div>
<div class="a g" style="left:832px;top:331px;width:40px;text-align:right;line-height:13px">2,29</div>
<div class="a g" style="left:879px;top:331px;line-height:13px">Manuale</div>
<svg class="a" style="left:620px;top:331px" width="8" height="12" viewBox="0 0 8 12"><path d="M1 0.5L7 6L1 11.5Z" fill="#000"/></svg>
<div class="a g" style="left:639px;top:382px;line-height:13px">9</div>
<svg class="a" style="left:951px;top:154px" width="10" height="7" viewBox="0 0 10 7"><path d="M1.5 5.8L5 2.3L8.5 5.8" fill="none" stroke="#505050" stroke-width="2.3"/></svg>
<div class="a" style="left:949px;top:357px;width:15px;height:24px;background:#cdcdcd"></div>
<svg class="a" style="left:951px;top:386px" width="10" height="7" viewBox="0 0 10 7"><path d="M1.5 1.2L5 4.7L8.5 1.2" fill="none" stroke="#505050" stroke-width="2.3"/></svg>
<svg class="a" style="left:615px;top:401px" width="7" height="10" viewBox="0 0 7 10"><path d="M5.5 1.5L2 5L5.5 8.5" fill="none" stroke="#505050" stroke-width="2.3"/></svg>
<div class="a" style="left:628px;top:400px;width:38px;height:14px;background:#cdcdcd"></div>
<svg class="a" style="left:936px;top:401px" width="7" height="10" viewBox="0 0 7 10"><path d="M1.5 1.5L5 5L1.5 8.5" fill="none" stroke="#505050" stroke-width="2.3"/></svg>

<div class="a" style="left:10px;top:428px;width:951px;height:186px;background:#fff;border-top:1px solid #a0a0a0"></div>
<div class="a" style="left:10px;top:429px;width:950px;height:32px;background:#f3f3f3;border-bottom:1px solid #a0a0a0"></div>
<div class="a" style="left:10px;top:461px;width:906px;height:17px;background:#e5f1fb"></div>
<div class="a" style="left:10px;top:478px;width:906px;height:1px;background:#c8c8c8"></div>
<div class="a" style="left:10px;top:496px;width:906px;height:1px;background:#c8c8c8"></div>
<div class="a" style="left:10px;top:497px;width:906px;height:17px;background:#e5f1fb"></div>
<div class="a" style="left:10px;top:514px;width:906px;height:1px;background:#c8c8c8"></div>
<div class="a" style="left:10px;top:461px;width:41px;height:17px;background:#3399ff"></div>
<div class="vl" style="left:51px;top:429px;height:31px"></div>
<div class="a" style="left:51px;top:461px;width:1px;height:53px;background:#c8c8c8"></div>
<div class="vl" style="left:108px;top:429px;height:31px"></div>
<div class="a" style="left:108px;top:461px;width:1px;height:53px;background:#c8c8c8"></div>
<div class="vl" style="left:190px;top:429px;height:31px"></div>
<div class="a" style="left:190px;top:461px;width:1px;height:53px;background:#c8c8c8"></div>
<div class="vl" style="left:247px;top:429px;height:31px"></div>
<div class="a" style="left:247px;top:461px;width:1px;height:53px;background:#c8c8c8"></div>
<div class="vl" style="left:304px;top:429px;height:31px"></div>
<div class="a" style="left:304px;top:461px;width:1px;height:53px;background:#c8c8c8"></div>
<div class="vl" style="left:361px;top:429px;height:31px"></div>
<div class="a" style="left:361px;top:461px;width:1px;height:53px;background:#c8c8c8"></div>
<div class="vl" style="left:443px;top:429px;height:31px"></div>
<div class="a" style="left:443px;top:461px;width:1px;height:53px;background:#c8c8c8"></div>
<div class="vl" style="left:500px;top:429px;height:31px"></div>
<div class="a" style="left:500px;top:461px;width:1px;height:53px;background:#c8c8c8"></div>
<div class="vl" style="left:557px;top:429px;height:31px"></div>
<div class="a" style="left:557px;top:461px;width:1px;height:53px;background:#c8c8c8"></div>
<div class="vl" style="left:640px;top:429px;height:31px"></div>
<div class="a" style="left:640px;top:461px;width:1px;height:53px;background:#c8c8c8"></div>
<div class="vl" style="left:696px;top:429px;height:31px"></div>
<div class="a" style="left:696px;top:461px;width:1px;height:53px;background:#c8c8c8"></div>
<div class="vl" style="left:748px;top:429px;height:31px"></div>
<div class="a" style="left:748px;top:461px;width:1px;height:53px;background:#c8c8c8"></div>
<div class="vl" style="left:791px;top:429px;height:31px"></div>
<div class="a" style="left:791px;top:461px;width:1px;height:53px;background:#c8c8c8"></div>
<div class="vl" style="left:833px;top:429px;height:31px"></div>
<div class="a" style="left:833px;top:461px;width:1px;height:53px;background:#c8c8c8"></div>
<div class="vl" style="left:874px;top:429px;height:31px"></div>
<div class="a" style="left:874px;top:461px;width:1px;height:53px;background:#c8c8c8"></div>
<div class="vl" style="left:916px;top:429px;height:31px"></div>
<div class="a" style="left:916px;top:461px;width:1px;height:53px;background:#c8c8c8"></div>
<div class="a g" style="left:12px;top:438px;width:39px;text-align:center;line-height:12.5px;margin-top:1px">Classe</div>
<div class="a g" style="left:52px;top:438px;width:56px;text-align:center;line-height:12.5px;margin-top:1px">Ricarico 1</div>
<div class="a g" style="left:109px;top:438px;width:81px;text-align:center;line-height:12.5px;margin-top:1px">Prezzo 1</div>
<div class="a g" style="left:191px;top:432px;width:56px;text-align:center;line-height:12.5px;margin-top:1px">Ricarico<br>Effettivo</div>
<div class="a g" style="left:248px;top:432px;width:56px;text-align:center;line-height:12.5px;margin-top:1px">Margine<br>Effettivo</div>
<div class="a g" style="left:305px;top:438px;width:56px;text-align:center;line-height:12.5px;margin-top:1px">Ricarico 2</div>
<div class="a g" style="left:362px;top:438px;width:81px;text-align:center;line-height:12.5px;margin-top:1px">Prezzo 2</div>
<div class="a g" style="left:444px;top:432px;width:56px;text-align:center;line-height:12.5px;margin-top:1px">Ricarico<br>Effettivo</div>
<div class="a g" style="left:501px;top:432px;width:56px;text-align:center;line-height:12.5px;margin-top:1px">Margine<br>Effettivo</div>
<div class="a g" style="left:558px;top:432px;width:82px;text-align:center;line-height:12.5px;margin-top:1px">Prezzo<br>Imposto (d)</div>
<div class="a g" style="left:641px;top:432px;width:55px;text-align:center;line-height:12.5px;margin-top:1px">Costo<br>Base</div>
<div class="a g" style="left:697px;top:438px;width:51px;text-align:center;line-height:12.5px;margin-top:1px">Iva</div>
<div class="a g" style="left:749px;top:432px;width:42px;text-align:center;line-height:12.5px;margin-top:1px">Tipo<br>prezzo</div>
<div class="a g" style="left:792px;top:438px;width:41px;text-align:center;line-height:12.5px;margin-top:1px">Offerta</div>
<div class="a g" style="left:834px;top:432px;width:40px;text-align:center;line-height:12.5px;margin-top:1px">Prezzo<br>Sosp.</div>
<div class="a g" style="left:875px;top:432px;width:41px;text-align:center;line-height:12.5px;margin-top:1px">Prezzo<br>Casse</div>
<div class="a g" style="left:12px;top:463px;width:39px;text-align:center;line-height:14px;color:#fff;">1</div>
<div class="a g" style="left:52px;top:463px;width:53px;text-align:right;line-height:14px;font-weight:bold;font-size:12px;">56,0</div>
<div class="a g" style="left:109px;top:463px;width:78px;text-align:right;line-height:14px;font-weight:bold;font-size:12px;">2,19</div>
<div class="a g" style="left:191px;top:463px;width:53px;text-align:right;line-height:14px;">55,98 <span style="display:inline-block;width:7px;overflow:visible"><span style="display:inline-block;transform:scaleX(.72);transform-origin:0 0">%</span></span></div>
<div class="a g" style="left:248px;top:463px;width:53px;text-align:right;line-height:14px;">35,89 <span style="display:inline-block;width:7px;overflow:visible"><span style="display:inline-block;transform:scaleX(.72);transform-origin:0 0">%</span></span></div>
<div class="a g" style="left:305px;top:463px;width:53px;text-align:right;line-height:14px;">0,0</div>
<div class="a g" style="left:362px;top:463px;width:78px;text-align:right;line-height:14px;font-weight:bold;font-size:12px;color:#1030e0;">2,34</div>
<div class="a g" style="left:444px;top:463px;width:53px;text-align:right;line-height:14px;">66,67 <span style="display:inline-block;width:7px;overflow:visible"><span style="display:inline-block;transform:scaleX(.72);transform-origin:0 0">%</span></span></div>
<div class="a g" style="left:501px;top:463px;width:53px;text-align:right;line-height:14px;">40,00 <span style="display:inline-block;width:7px;overflow:visible"><span style="display:inline-block;transform:scaleX(.72);transform-origin:0 0">%</span></span></div>
<div class="a g" style="left:558px;top:463px;width:79px;text-align:right;line-height:14px;">0,00</div>
<div class="a g" style="left:641px;top:463px;width:52px;text-align:right;line-height:14px;">1,35</div>
<div class="a g" style="left:697px;top:463px;width:48px;text-align:right;line-height:14px;">4,00 <span style="display:inline-block;width:7px;overflow:visible"><span style="display:inline-block;transform:scaleX(.72);transform-origin:0 0">%</span></span></div>
<div class="a g" style="left:749px;top:463px;width:42px;text-align:center;line-height:14px;">=</div>
<div class="a g" style="left:875px;top:463px;width:41px;text-align:center;line-height:14px;">2.19</div>
<div class="a g" style="left:12px;top:481px;width:39px;text-align:center;line-height:14px;">2</div>
<div class="a g" style="left:52px;top:481px;width:53px;text-align:right;line-height:14px;font-weight:bold;font-size:12px;">75,5</div>
<div class="a g" style="left:109px;top:481px;width:78px;text-align:right;line-height:14px;font-weight:bold;font-size:12px;">2,19</div>
<div class="a g" style="left:191px;top:481px;width:53px;text-align:right;line-height:14px;">55,98 <span style="display:inline-block;width:7px;overflow:visible"><span style="display:inline-block;transform:scaleX(.72);transform-origin:0 0">%</span></span></div>
<div class="a g" style="left:248px;top:481px;width:53px;text-align:right;line-height:14px;">35,89 <span style="display:inline-block;width:7px;overflow:visible"><span style="display:inline-block;transform:scaleX(.72);transform-origin:0 0">%</span></span></div>
<div class="a g" style="left:305px;top:481px;width:53px;text-align:right;line-height:14px;">0,0</div>
<div class="a g" style="left:558px;top:481px;width:79px;text-align:right;line-height:14px;">0,00</div>
<div class="a g" style="left:641px;top:481px;width:52px;text-align:right;line-height:14px;">1,35</div>
<div class="a g" style="left:697px;top:481px;width:48px;text-align:right;line-height:14px;">4,00 <span style="display:inline-block;width:7px;overflow:visible"><span style="display:inline-block;transform:scaleX(.72);transform-origin:0 0">%</span></span></div>
<div class="a g" style="left:749px;top:481px;width:42px;text-align:center;line-height:14px;">&lt;</div>
<div class="a g" style="left:875px;top:481px;width:41px;text-align:center;line-height:14px;">2.19</div>
<div class="a g" style="left:12px;top:499px;width:39px;text-align:center;line-height:14px;">3</div>
<div class="a g" style="left:52px;top:499px;width:53px;text-align:right;line-height:14px;font-weight:bold;font-size:12px;">63,1</div>
<div class="a g" style="left:109px;top:499px;width:78px;text-align:right;line-height:14px;font-weight:bold;font-size:12px;">2,29</div>
<div class="a g" style="left:191px;top:499px;width:53px;text-align:right;line-height:14px;">63,11 <span style="display:inline-block;width:7px;overflow:visible"><span style="display:inline-block;transform:scaleX(.72);transform-origin:0 0">%</span></span></div>
<div class="a g" style="left:248px;top:499px;width:53px;text-align:right;line-height:14px;">38,69 <span style="display:inline-block;width:7px;overflow:visible"><span style="display:inline-block;transform:scaleX(.72);transform-origin:0 0">%</span></span></div>
<div class="a g" style="left:305px;top:499px;width:53px;text-align:right;line-height:14px;">0,0</div>
<div class="a g" style="left:558px;top:499px;width:79px;text-align:right;line-height:14px;">0,00</div>
<div class="a g" style="left:641px;top:499px;width:52px;text-align:right;line-height:14px;">1,35</div>
<div class="a g" style="left:697px;top:499px;width:48px;text-align:right;line-height:14px;">4,00 <span style="display:inline-block;width:7px;overflow:visible"><span style="display:inline-block;transform:scaleX(.72);transform-origin:0 0">%</span></span></div>
<div class="a g" style="left:749px;top:499px;width:42px;text-align:center;line-height:14px;">=</div>
<div class="a g" style="left:875px;top:499px;width:41px;text-align:center;line-height:14px;">2.29</div>
<div class="a" style="left:378px;top:435px;width:53px;height:19px;border:2px solid #e0141e"></div>
<div class="a" style="left:405px;top:457px;width:39px;height:22px;border:3px solid #e0141e"></div>
<svg class="a" style="left:964px;top:434px" width="10" height="7" viewBox="0 0 10 7"><path d="M1.5 5.8L5 2.3L8.5 5.8" fill="none" stroke="#505050" stroke-width="2.3"/></svg>
<div class="a" style="left:961px;top:445px;width:15px;height:50px;background:#cdcdcd"></div>
<svg class="a" style="left:964px;top:601px" width="10" height="7" viewBox="0 0 10 7"><path d="M1.5 1.2L5 4.7L8.5 1.2" fill="none" stroke="#505050" stroke-width="2.3"/></svg>
<svg class="a" style="left:15px;top:616px" width="7" height="10" viewBox="0 0 7 10"><path d="M5.5 1.5L2 5L5.5 8.5" fill="none" stroke="#505050" stroke-width="2.3"/></svg>
<div class="a" style="left:28px;top:614px;width:57px;height:15px;background:#cdcdcd"></div>
<svg class="a" style="left:948px;top:616px" width="7" height="10" viewBox="0 0 7 10"><path d="M1.5 1.5L5 5L1.5 8.5" fill="none" stroke="#505050" stroke-width="2.3"/></svg>
<div class="btn" style="left:10px;top:652px;width:66px;height:22px">OK</div>
<div class="btn" style="left:88px;top:652px;width:66px;height:22px">Annulla</div>
<div class="btn" style="left:166px;top:652px;width:66px;height:22px;border:2px solid #0078d7;line-height:18px">Salva</div>
<div class="lbl" style="left:567px;top:654px">Magazzino visualizzato:</div>
<div class="a" style="left:699px;top:651px;width:282px;height:23px;background:#e5e5e5;border:1px solid #adadad"></div>
<div class="lbl" style="left:703px;top:656px">000001 - Magazzino 1</div>
<svg class="a" style="left:965px;top:659px" width="12" height="8" viewBox="0 0 12 8"><path d="M1 1.5L6 6.5L11 1.5" fill="none" stroke="#404040" stroke-width="1.1"/></svg>
<div class="a" style="left:3px;top:679px;width:981px;height:14px;background:linear-gradient(#a9c0e3,#8eaad8 45%,#9bb6e0)"></div>
<svg class="a" style="left:3px;top:679px" width="120" height="14" viewBox="0 0 120 14"><defs><linearGradient id="t1" x1="0" y1="0" x2="0" y2="1"><stop offset="0" stop-color="#ffffff"/><stop offset="1" stop-color="#c6daf6"/></linearGradient><linearGradient id="t2" x1="0" y1="0" x2="0" y2="1"><stop offset="0" stop-color="#dde9fa"/><stop offset="0.5" stop-color="#cfe0f8"/><stop offset="1" stop-color="#b6cdf0"/></linearGradient></defs><path d="M0 0H46L33 14H0Z" fill="url(#t1)"/><path d="M46 0H80L68 14H33Z" fill="url(#t2)" stroke="#8eaad8" stroke-width="0.8"/><path d="M80 0H115L103 14H68Z" fill="url(#t2)" stroke="#8eaad8" stroke-width="0.8"/></svg>
<div class="a" style="left:18px;top:679px;font-size:12px;font-weight:bold;color:#3a3ab8;line-height:14px">1</div>
<div class="a" style="left:52px;top:679px;font-size:12px;color:#3a3ab8;line-height:14px">2</div>
<div class="a" style="left:87px;top:679px;font-size:12px;color:#3a3ab8;line-height:14px">3</div>
</body></html>
